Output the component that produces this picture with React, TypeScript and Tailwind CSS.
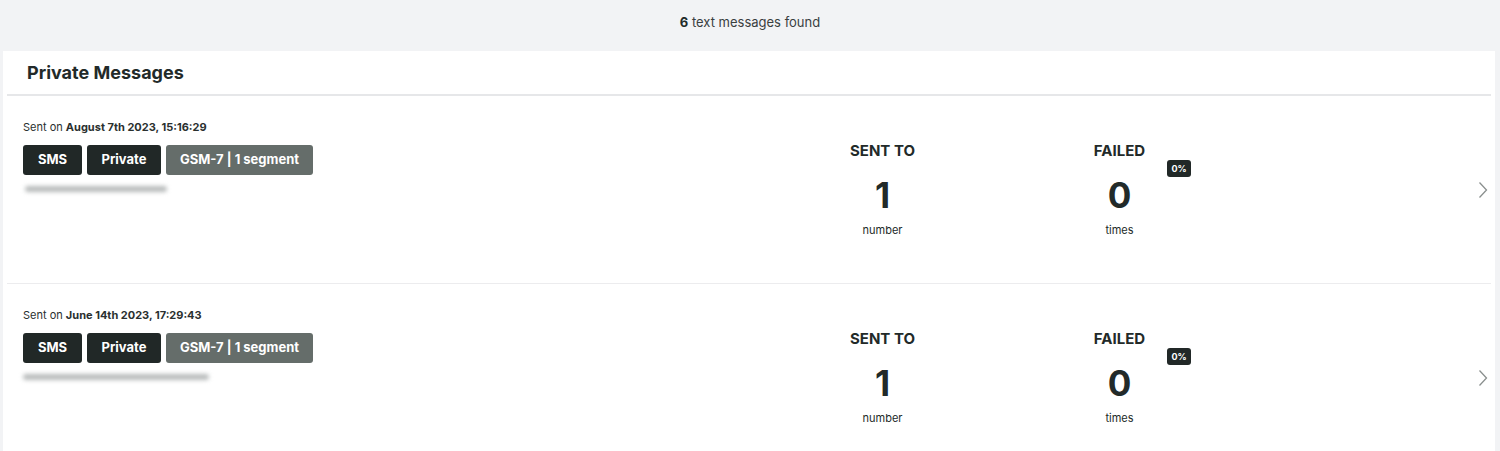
import React from "react";

const font = { fontFamily: '"Inter", "Open Sans", sans-serif' };

function Chevron() {
  return (
    <svg width="10" height="18" viewBox="0 0 10 18" fill="none">
      <path d="M1.5 1.5 L8.5 9 L1.5 16.5" stroke="#8a8f8e" strokeWidth="1.3" />
    </svg>
  );
}

function Row({ date, blurW, blurX }: { date: string; blurW: number; blurX: number }) {
  return (
    <div className="flex h-[188px] border-b border-[#ececee]">
      <div className="flex-1 pl-[16px] pt-[23px]">
        <div className="text-[11px] leading-[16px] text-[#2a302f]">
          Sent on <span className="font-bold">{date}</span>
        </div>
        <div className="mt-[10px] flex gap-[5px]">
          <span className="flex h-[30px] w-[59px] items-center justify-center rounded-[3px] bg-[#212827] text-[13px] font-bold text-white">SMS</span>
          <span className="flex h-[30px] w-[74px] items-center justify-center rounded-[3px] bg-[#212827] text-[13px] font-bold text-white">Private</span>
          <span className="flex h-[30px] w-[147px] items-center justify-center rounded-[3px] bg-[#656d6a] text-[13px] font-bold text-white">GSM-7 | 1 segment</span>
        </div>
        <div className="mt-[11px] h-[6px] rounded-full bg-[#b8bbbb] blur-[2px]" style={{ width: blurW, marginLeft: blurX }} />
      </div>
      <div className="flex items-center">
        <div className="flex w-[237px] flex-col items-center text-[#222a29]">
          <div className="text-[15px] font-bold leading-[20px]">SENT TO</div>
          <div className="mt-[14px] text-[35px] font-bold leading-[40px]">1</div>
          <div className="mt-[7px] text-[11px] leading-[16px]">number</div>
        </div>
        <div className="relative flex w-[237px] flex-col items-center text-[#222a29]">
          <div className="text-[15px] font-bold leading-[20px]">FAILED</div>
          <div className="mt-[14px] text-[35px] font-bold leading-[40px]">0</div>
          <div className="mt-[7px] text-[11px] leading-[16px]">times</div>
          <span className="absolute left-[166px] top-[19px] flex h-[17px] w-[24px] items-center justify-center rounded-[3px] bg-[#212827] text-[9px] font-bold text-white">0%</span>
        </div>
      </div>
      <div className="flex w-[253px] items-center justify-end pr-[3px]">
        <Chevron />
      </div>
    </div>
  );
}

export default function App() {
  return (
    <div className="h-[451px] overflow-hidden bg-[#f2f3f5]" style={font}>
      <div className="flex h-[51px] items-center justify-center pb-[6px] text-[13px] text-[#3a403f]">
        <span className="font-bold text-[#222a29]">6</span>&nbsp;text messages found
      </div>
      <div className="ml-[3px] mr-[5px] bg-white px-[4px]">
        <div className="flex h-[45px] items-center border-b-2 border-[#e6e7e9] pl-[20px] text-[18px] font-bold text-[#222a29]">
          Private Messages
        </div>
        <Row date="August 7th 2023, 15:16:29" blurW={142} blurX={2} />
        <Row date="June 14th 2023, 17:29:43" blurW={186} blurX={0} />
      </div>
    </div>
  );
}
